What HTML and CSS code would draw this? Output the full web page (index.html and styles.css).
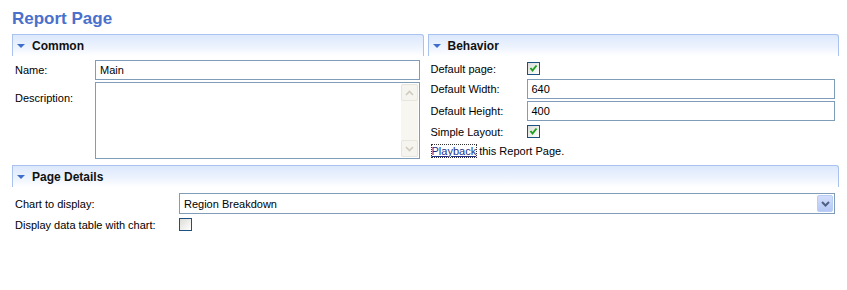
FILE: index.html
```html
<html>
    <head>
        <title>Report Page</title>
        <meta charset="utf-8">
        <link rel="stylesheet" href="styles.css">
    </head>
    <body>
        <h1 class="page-title">Report Page</h1>
        <div class="columns">
            <section class="section">
                <header class="section-head"><span class="twisty"></span>Common</header>
                <div class="form form-common">
                    <label class="lbl">Name:</label>
                    <div class="field">Main</div>
                    <label class="lbl lbl-top">Description:</label>
                    <div class="field memo">
                        <div class="vscroll">
                            <span class="sbtn">
                                <svg width="9" height="6" viewBox="0 0 9 6"><polyline points="1,5 4.5,1.5 8,5" fill="none" stroke="#cfccbf" stroke-width="1.6"/></svg>
                            </span>
                            <span class="strack"></span>
                            <span class="sbtn">
                                <svg width="9" height="6" viewBox="0 0 9 6"><polyline points="1,1 4.5,4.5 8,1" fill="none" stroke="#cfccbf" stroke-width="1.6"/></svg>
                            </span>
                        </div>
                    </div>
                </div>
            </section>
            <section class="section">
                <header class="section-head"><span class="twisty"></span>Behavior</header>
                <div class="form form-behavior">
                    <label class="lbl">Default page:</label>
                    <span class="check">
                        <svg width="11" height="11" viewBox="0 0 11 11"><polyline points="2.5,5 4.5,7.5 8.5,2.5" fill="none" stroke="#21a121" stroke-width="2"/></svg>
                    </span>
                    <label class="lbl">Default Width:</label>
                    <div class="field">640</div>
                    <label class="lbl">Default Height:</label>
                    <div class="field">400</div>
                    <label class="lbl">Simple Layout:</label>
                    <span class="check">
                        <svg width="11" height="11" viewBox="0 0 11 11"><polyline points="2.5,5 4.5,7.5 8.5,2.5" fill="none" stroke="#21a121" stroke-width="2"/></svg>
                    </span>
                    <div class="link-row"><a class="link" href="#">Playback</a> this Report Page.</div>
                </div>
            </section>
        </div>
        <section class="section details">
            <header class="section-head"><span class="twisty"></span>Page Details</header>
            <div class="form form-details">
                <label class="lbl">Chart to display:</label>
                <div class="field combo">
                    <span class="combo-text">Region Breakdown</span>
                    <span class="combo-btn">
                        <svg width="9" height="6" viewBox="0 0 9 6"><polyline points="1,1 4.5,4.5 8,1" fill="none" stroke="#4d6185" stroke-width="2"/></svg>
                    </span>
                </div>
                <label class="lbl">Display data table with chart:</label>
                <span class="check"></span>
            </div>
        </section>
    </body>
</html>
```

FILE: styles.css
```css
body{
    margin: 0;
    padding: 0 8px 0 12px;
    background-color: #fff;
    font-family: "Liberation Sans", Arial, sans-serif;
    font-size: 11px;
    color: #000;
    cursor: default;
}
.page-title{
    margin: 0 0 5px 0;
    padding-top: 9px;
    font-size: 17px;
    line-height: 20px;
    font-weight: bold;
    color: #4a70cc;
}
.columns{
    display: flex;
    gap: 4px;
}
.columns .section{
    flex: 1;
    min-width: 0;
}
.section-head{
    height: 21px;
    display: flex;
    align-items: center;
    border: 1px solid #a9c2ef;
    border-bottom: none;
    border-top-right-radius: 3px;
    background: linear-gradient(#dce8fc, #eef4fe 60%, #fff);
    font-size: 12px;
    font-weight: bold;
    color: #111;
}
.twisty{
    width: 0;
    height: 0;
    margin: 1px 7px 0 4px;
    border-left: 4px solid transparent;
    border-right: 4px solid transparent;
    border-top: 4px solid #3f6ec9;
}
.form{
    display: grid;
    align-items: center;
}
.form-common{
    grid-template-columns: 80px 1fr;
    row-gap: 2px;
    padding: 4px 4px 0 3px;
}
.form-behavior{
    grid-template-columns: 96px 1fr;
    grid-template-rows: 17px 20px 20px 17px 17px;
    row-gap: 2px;
    padding: 4px 4px 0 3px;
}
.form-details{
    grid-template-columns: 164px 1fr;
    grid-template-rows: 21px 17px;
    row-gap: 2px;
    padding: 6px 4px 0 3px;
}
.lbl-top{
    align-self: start;
    padding-top: 10px;
}
.field{
    box-sizing: border-box;
    height: 20px;
    line-height: 18px;
    border: 1px solid #7f9db9;
    padding-left: 4px;
    background: #fff;
}
.memo{
    height: 77px;
    display: flex;
    justify-content: flex-end;
    padding: 1px;
}
.vscroll{
    width: 17px;
    display: flex;
    flex-direction: column;
    background: #f7f6f1;
}
.sbtn{
    box-sizing: border-box;
    height: 17px;
    display: flex;
    align-items: center;
    justify-content: center;
    border: 1px solid #e8e6dc;
    border-radius: 2px;
    background: #f5f4ee;
}
.strack{
    flex: 1;
}
.check{
    box-sizing: border-box;
    width: 13px;
    height: 13px;
    display: flex;
    align-items: center;
    justify-content: center;
    border: 1px solid #1c5180;
    background: linear-gradient(135deg, #dcdcd7, #fff);
}
.link-row{
    grid-column: 1 / 3;
    padding-left: 1px;
}
.link{
    color: #1f2e8a;
    text-decoration: underline;
    outline: 1px dotted #333;
}
.combo{
    height: 21px;
    display: flex;
    align-items: center;
    padding: 1px 1px 1px 4px;
}
.combo-text{
    flex: 1;
}
.combo-btn{
    box-sizing: border-box;
    width: 16px;
    height: 17px;
    display: flex;
    align-items: center;
    justify-content: center;
    border: 1px solid #bacdf6;
    border-radius: 2px;
    background: linear-gradient(#d2defc, #b5c9f5);
}
.details{
    margin-top: 6px;
}
```
